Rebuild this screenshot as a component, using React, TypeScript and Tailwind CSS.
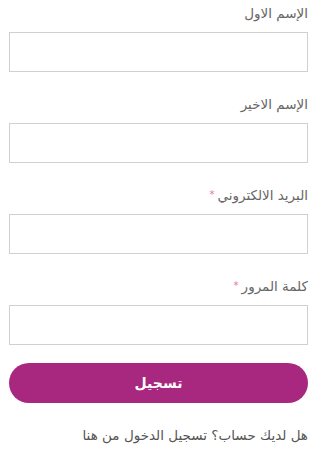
import React from "react";

const fields = [
  { label: "الإسم الاول", required: false, type: "text" },
  { label: "الإسم الاخير", required: false, type: "text" },
  { label: "البريد الالكتروني", required: true, type: "email" },
  { label: "كلمة المرور", required: true, type: "password" },
];

const App: React.FC = () => {
  return (
    <div
      dir="rtl"
      className="w-[321px] h-[457px] bg-white pl-[9px] pr-[13px] pt-[3px] font-['DejaVu_Sans',sans-serif]"
    >
      <form className="flex flex-col gap-[22px]">
        {fields.map((field) => (
          <div key={field.label} className="flex flex-col">
            <label className="h-5 leading-5 text-[13.5px] text-[#666] mb-[9px]">
              {field.label}
              {field.required && <span className="text-[#e8769a] text-[10px] mr-[3px] align-top">*</span>}
            </label>
            <input
              type={field.type}
              className="h-10 w-full border border-[#d0d0d0] bg-white px-2 outline-none"
            />
          </div>
        ))}
      </form>

      <button
        type="button"
        className="mt-[18px] h-10 w-full rounded-full bg-[#a9287f] text-white text-[14px] font-bold"
      >
        تسجيل
      </button>

      <p className="mt-[22px] h-5 leading-5 text-[13.5px] text-[#555]">
        هل لديك حساب؟ تسجيل الدخول من هنا
      </p>
    </div>
  );
};

export default App;
